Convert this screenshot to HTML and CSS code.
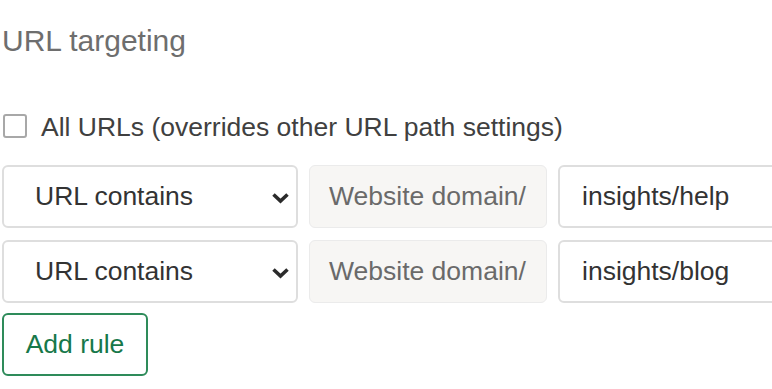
FILE: index.html
```html
<!DOCTYPE html>
<html>
<head>
    <meta charset="utf-8" />
    <title>URL targeting</title>
    <link rel="stylesheet" href="styles.css">
</head>
<body>
    <div id="targeting">
        <h2 class="title">URL targeting</h2>
        <label class="all-urls">
            <span class="checkbox"></span>
            All URLs (overrides other URL path settings)
        </label>
        <div class="rules">
            <div class="rule">
                <div class="match">
                    <span>URL contains</span>
                    <svg width="19" height="12" viewBox="0 0 19 12"><polyline points="2.5,2.5 9.5,9 16.5,2.5" fill="none" stroke="#2b2b2b" stroke-width="3.6"/></svg>
                </div>
                <div class="domain">Website domain/</div>
                <div class="path">insights/help</div>
            </div>
            <div class="rule">
                <div class="match">
                    <span>URL contains</span>
                    <svg width="19" height="12" viewBox="0 0 19 12"><polyline points="2.5,2.5 9.5,9 16.5,2.5" fill="none" stroke="#2b2b2b" stroke-width="3.6"/></svg>
                </div>
                <div class="domain">Website domain/</div>
                <div class="path">insights/blog</div>
            </div>
        </div>
        <button class="add-rule">Add rule</button>
    </div>
</body>
</html>
```

FILE: styles.css
```css
html, body{
    margin: 0;
    overflow: hidden;
    background-color: #ffffff;
}
body{
    font-family: 'Liberation Sans', Arial, sans-serif;
    color: #333333;
}
#targeting{
    padding: 23px 0 0 2px;
    width: 1000px;
}
.title{
    margin: 0;
    font-size: 30px;
    line-height: 36px;
    font-weight: normal;
    color: #6e6e6e;
}
.all-urls{
    display: flex;
    align-items: center;
    margin-top: 53px;
    height: 30px;
    font-size: 26.5px;
    color: #404040;
}
.checkbox{
    width: 20px;
    height: 20px;
    border: 2px solid #a8a8a8;
    border-radius: 3px;
    margin: -3px 14px 0 1px;
}
.rules{
    margin-top: 23px;
}
.rule{
    display: flex;
    gap: 11px;
    margin-bottom: 12px;
}
.match, .domain, .path{
    box-sizing: border-box;
    height: 63px;
    display: flex;
    align-items: center;
    font-size: 26.5px;
    border-radius: 6px;
}
.match{
    width: 296px;
    justify-content: space-between;
    padding: 0 6px 0 31px;
    border: 2px solid #dedede;
    color: #333333;
}
.match svg{
    margin-top: 2px;
}
.domain{
    width: 238px;
    padding: 0 19px;
    background-color: #f7f6f4;
    border: 1px solid #ebebeb;
    color: #6a6a6a;
}
.path{
    width: 260px;
    padding: 0 22px;
    border: 2px solid #dedede;
    color: #333333;
}
.add-rule{
    margin-top: -2px;
    box-sizing: border-box;
    width: 146px;
    height: 63px;
    border: 2px solid #2e8b5a;
    border-radius: 6px;
    background-color: #ffffff;
    color: #17784a;
    font-family: 'Liberation Sans', Arial, sans-serif;
    font-size: 26.5px;
    cursor: pointer;
}
```
